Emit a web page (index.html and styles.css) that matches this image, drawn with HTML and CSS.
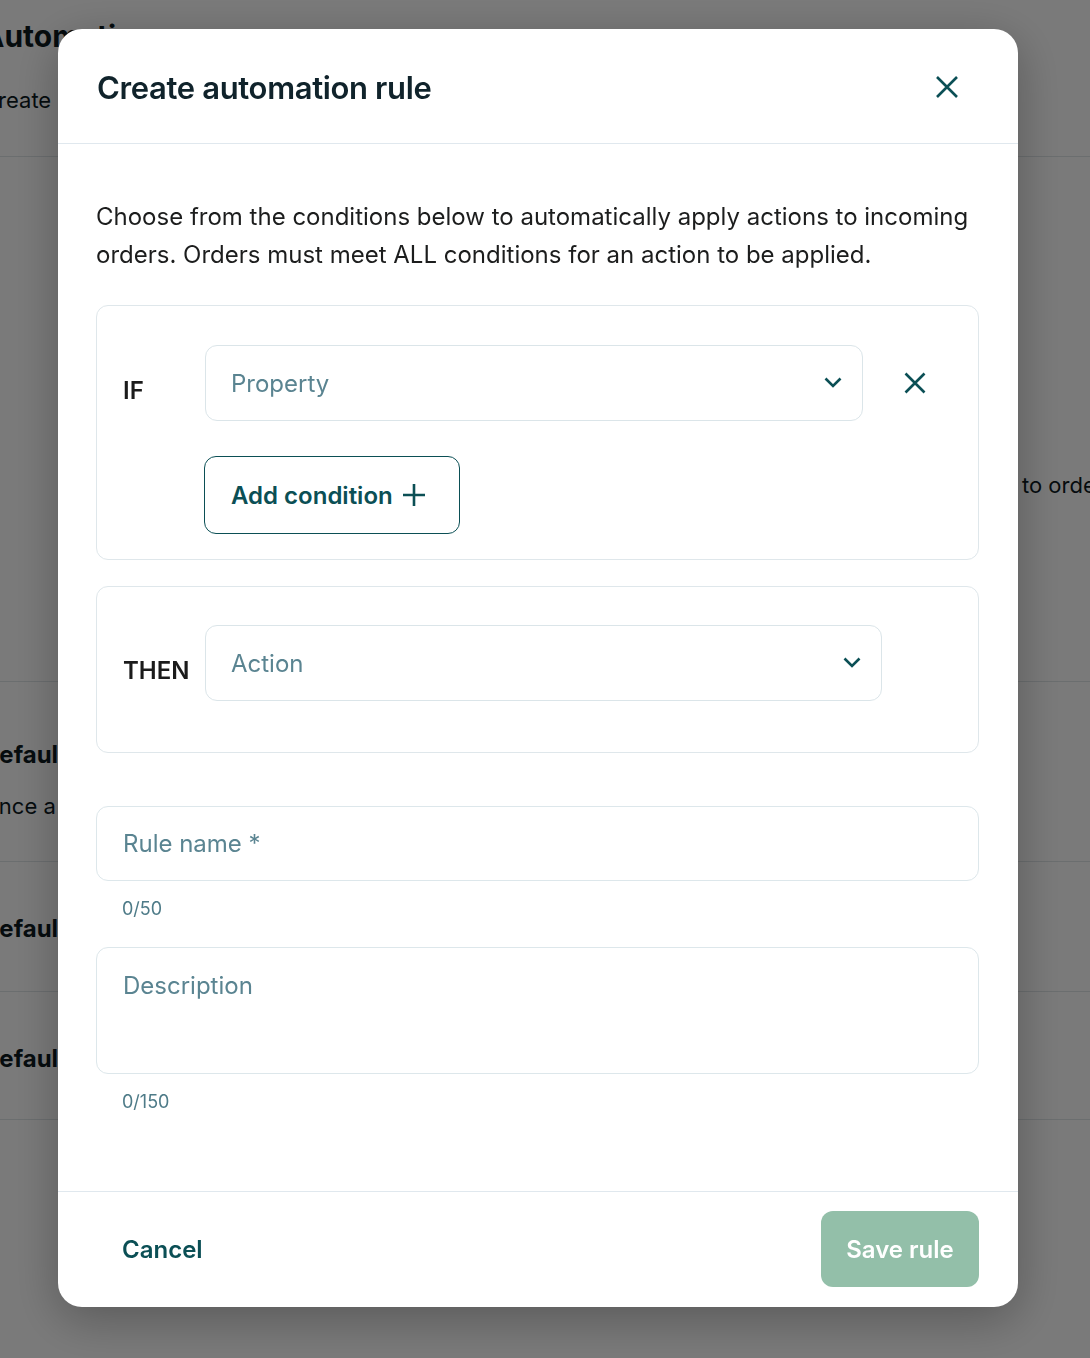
FILE: index.html
```html
<!DOCTYPE html>
<html lang="en">
<head>
<meta charset="utf-8">
<title>Create automation rule</title>
<link rel="stylesheet" href="styles.css">
</head>
<body>
<div class="page">
  <header class="page-head">
    <h1 class="page-title">Automations</h1>
    <p class="page-sub">Create rules to automatically apply actions to incoming orders</p>
  </header>
  <section class="page-intro">
    <p class="intro-text">to orders that match your conditions</p>
  </section>
  <section class="rule-row">
    <div class="rule-name">Default routing</div>
    <div class="rule-desc">Once a day, route new orders to the main warehouse</div>
  </section>
  <section class="rule-row short">
    <div class="rule-name">Default hold</div>
  </section>
  <section class="rule-row short last">
    <div class="rule-name">Default tag</div>
  </section>
</div>

<div class="overlay">
  <div class="modal" role="dialog" aria-labelledby="modal-title">
    <div class="modal-head">
      <h2 class="modal-title" id="modal-title">Create automation rule</h2>
      <button class="icon-btn close-btn" aria-label="Close">
        <svg width="24" height="24" viewBox="0 0 24 24" fill="none"><path d="M2 2L22 22M22 2L2 22" stroke="#0b4f55" stroke-width="2.6"/></svg>
      </button>
    </div>
    <div class="modal-body">
      <p class="intro">Choose from the conditions below to automatically apply actions to incoming orders. Orders must meet ALL conditions for an action to be applied.</p>

      <div class="rule-box if-box">
        <div class="rule-line">
          <div class="rule-label">IF</div>
          <div class="select">
            <span class="placeholder">Property</span>
            <svg class="chev" width="18" height="11" viewBox="0 0 18 11" fill="none"><path d="M1.5 1.5L9 9L16.5 1.5" stroke="#0b4f55" stroke-width="2.6"/></svg>
          </div>
          <button class="icon-btn remove-btn" aria-label="Remove condition">
            <svg width="22" height="22" viewBox="0 0 22 22" fill="none"><path d="M1.5 1.5L20.5 20.5M20.5 1.5L1.5 20.5" stroke="#0b4f55" stroke-width="2.6"/></svg>
          </button>
        </div>
        <button class="add-btn">Add condition
          <svg width="24" height="24" viewBox="0 0 24 24" fill="none"><path d="M12 1V23M1 12H23" stroke="#0b4f55" stroke-width="2.6"/></svg>
        </button>
      </div>

      <div class="rule-box then-box">
        <div class="rule-line">
          <div class="rule-label">THEN</div>
          <div class="select">
            <span class="placeholder">Action</span>
            <svg class="chev" width="18" height="11" viewBox="0 0 18 11" fill="none"><path d="M1.5 1.5L9 9L16.5 1.5" stroke="#0b4f55" stroke-width="2.6"/></svg>
          </div>
        </div>
      </div>

      <div class="field name-field"><span class="placeholder">Rule name *</span></div>
      <div class="counter">0/50</div>
      <div class="field desc-field"><span class="placeholder">Description</span></div>
      <div class="counter">0/150</div>
    </div>
    <div class="modal-foot">
      <button class="cancel-btn">Cancel</button>
      <button class="save-btn" disabled>Save rule</button>
    </div>
  </div>
</div>
</body>
</html>
```

FILE: styles.css
```css
html, body {
  margin: 0;
  padding: 0;
  height: 100%;
  overflow: hidden;
}
body {
  font-family: Inter, "Noto Sans", "Liberation Sans", sans-serif;
  background: #ffffff;
  color: #0d1a1f;
}

/* background page */
.page {
  margin-left: -18px;
  width: 1108px;
  overflow: hidden;
}
.page-head {
  padding-top: 16px;
  height: 140px;
  border-bottom: 1px solid #dfe5e8;
}
.page-title {
  margin: 0;
  font-size: 30px;
  line-height: 40px;
  font-weight: 700;
  white-space: nowrap;
}
.page-sub {
  margin: 29px 0 0;
  font-size: 22px;
  line-height: 30px;
  white-space: nowrap;
}
.page-intro {
  height: 525px;
  border-bottom: 1px solid #dfe5e8;
  padding: 313px 0 0 1040px;
  box-sizing: border-box;
}
.intro-text {
  margin: 0;
  font-size: 22px;
  line-height: 30px;
  white-space: nowrap;
}
.rule-row {
  height: 180px;
  border-bottom: 1px solid #dfe5e8;
  box-sizing: border-box;
  padding-top: 58px;
}
.rule-row.short {
  height: 130px;
  padding-top: 52px;
}
.rule-row.last {
  height: 128px;
}
.rule-name {
  font-size: 24px;
  line-height: 30px;
  font-weight: 700;
  white-space: nowrap;
}
.rule-desc {
  margin-top: 21px;
  font-size: 22px;
  line-height: 30px;
  white-space: nowrap;
}

/* overlay + modal */
.overlay {
  position: fixed;
  inset: 0;
  background: rgba(0, 0, 0, 0.52);
  padding: 29px 0 0 58px;
}
.modal {
  width: 960px;
  background: #ffffff;
  border-radius: 24px;
  box-shadow: 0 12px 48px rgba(0, 0, 0, 0.28);
  overflow: hidden;
}
.modal-head {
  height: 115px;
  box-sizing: border-box;
  border-bottom: 1px solid #e0e8ee;
  display: flex;
  align-items: center;
  justify-content: space-between;
  padding: 2px 49px 0 39px;
}
.modal-title {
  margin: 0;
  font-size: 31px;
  font-weight: 600;
  letter-spacing: -0.35px;
  color: #10232b;
}
.icon-btn {
  background: none;
  border: 0;
  padding: 0;
  display: flex;
  align-items: center;
  justify-content: center;
  cursor: pointer;
}
.close-btn { width: 44px; height: 44px; }

.modal-body {
  padding: 54px 39px 77px 38px;
}
.intro {
  margin: 0 0 31px;
  font-size: 24px;
  line-height: 38px;
  color: #1c1d1d;
  letter-spacing: 0;
}
.rule-box {
  border: 1px solid #dfe7eb;
  border-radius: 12px;
}
.if-box { padding: 39px 33px 25px 26px; }
.then-box { margin-top: 26px; padding: 38px 96px 51px 26px; }
.rule-line {
  display: flex;
  align-items: center;
}
.rule-label {
  width: 82px;
  flex: none;
  padding-top: 14px;
  font-size: 24px;
  font-weight: 600;
  color: #1b1b1b;
}
.select {
  flex: 1;
  height: 76px;
  box-sizing: border-box;
  border: 1px solid #dbe5e9;
  border-radius: 12px;
  display: flex;
  align-items: center;
  justify-content: space-between;
  padding: 0 20px 0 25px;
}
.placeholder {
  font-size: 24px;
  color: #5a8491;
}
.chev { margin-top: -1px; }
.remove-btn {
  width: 60px;
  height: 60px;
  margin-left: 22px;
}
.add-btn {
  margin: 35px 0 0 81px;
  height: 78px;
  width: 256px;
  box-sizing: border-box;
  border: 1px solid #0b4f55;
  border-radius: 12px;
  background: #ffffff;
  display: inline-flex;
  align-items: center;
  gap: 9px;
  padding: 0 26px;
  font-family: inherit;
  font-size: 24px;
  font-weight: 600;
  color: #0b4f55;
  cursor: pointer;
}
.field {
  border: 1px solid #dde7eb;
  border-radius: 12px;
  box-sizing: border-box;
  padding-left: 26px;
}
.name-field {
  margin-top: 53px;
  height: 75px;
  display: flex;
  align-items: center;
}
.desc-field {
  margin-top: 26px;
  height: 127px;
  padding-top: 23px;
  line-height: 30px;
}
.counter {
  margin-top: 16px;
  padding-left: 26px;
  font-size: 18px;
  line-height: 24px;
  color: #4e7b88;
}
.modal-foot {
  border-top: 1px solid #e0e8ee;
  padding: 19px 39px 20px 38px;
  display: flex;
  align-items: center;
  justify-content: space-between;
}
.cancel-btn {
  background: none;
  border: 0;
  padding: 0 26px;
  font-family: inherit;
  font-size: 24px;
  font-weight: 600;
  color: #0b4f55;
  cursor: pointer;
}
.save-btn {
  width: 158px;
  height: 76px;
  border: 0;
  border-radius: 12px;
  background: #93bfa9;
  color: #ffffff;
  font-family: inherit;
  font-size: 24px;
  font-weight: 600;
}
```
